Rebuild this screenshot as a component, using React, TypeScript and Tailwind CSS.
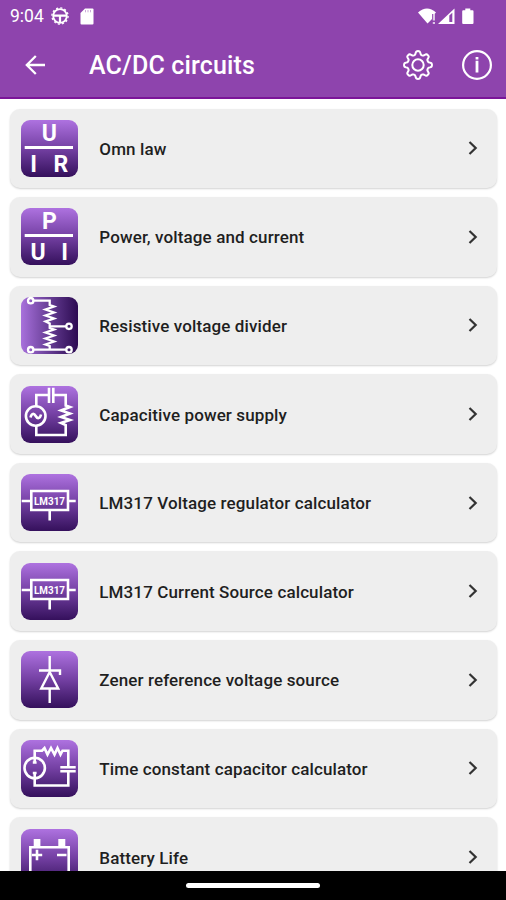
import React from "react";

const wire = { fill: "none", stroke: "#fff", strokeWidth: 2.6 };

function Letters({ top, left, right, leftX, rightX }: { top: string; left: string; right: string; leftX: number; rightX: number }) {
    return (
        <g fill="#fff" textAnchor="middle" className="font-[Roboto,sans-serif] text-[23px] font-bold">
            <text x="28.4" y="20.5">{top}</text>
            <path d="M3.7 27.5H52" stroke="#fff" strokeWidth="2.8" />
            <text x={leftX} y="51.5">{left}</text>
            <text x={rightX} y="51.5">{right}</text>
        </g>
    );
}

function Divider() {
    return (
        <g {...wire} strokeWidth={2.3}>
            <path d="M12.5 3.7H28.7V8L33 9.5L24.5 12.5L33 15.5L24.5 18.5L33 21.5L24.5 24.5L28.7 26.5V31L33 32.5L24.5 35.5L33 38.5L24.5 41.5L33 44.5L24.5 47.5L28.7 49V52.7" />
            <path d="M28.7 29.3H45.2M12.5 52.7H45.2" />
            <circle cx="9.7" cy="3.7" r="2.7" />
            <circle cx="48" cy="29.3" r="2.7" />
            <circle cx="9.7" cy="52.7" r="2.7" />
            <circle cx="48" cy="52.7" r="2.7" />
        </g>
    );
}

function PowerSupply() {
    return (
        <g {...wire}>
            <circle cx="14.7" cy="30" r="9.8" />
            <path d="M9.5 31.5C10.5 27 13 27 14.7 30S19 33 20 28.5" />
            <path d="M15.3 20V9H27.5M28 1.7V17M32.3 1.7V17M32.5 9H44.7V19.5L49 21L40 24.5L49 27.5L40 31L49 34L40 37L44.7 39V49H15.3V40" />
        </g>
    );
}

function Regulator() {
    return (
        <g>
            <path {...wire} d="M10.3 17H47V36H10.3ZM.7 27H10.3M47 27H54.7M28.7 37V46.5" />
            <text x="28.5" y="30.5" fill="#fff" textAnchor="middle" textLength="31" lengthAdjust="spacingAndGlyphs" className="font-[Roboto,sans-serif] text-[11px] font-bold">LM317</text>
        </g>
    );
}

function Zener() {
    return (
        <g {...wire} strokeWidth={2.4}>
            <path d="M28.7 5V20M28.7 38V52M18 19.5H39V24" />
            <path d="M28.7 21L20.2 37.5H37.2Z" />
        </g>
    );
}

function TimeConstant() {
    return (
        <g {...wire}>
            <circle cx="13.7" cy="28" r="10.2" />
            <path d="M13.7 23V10.7H21L23.5 8L26.5 14.5L30 8L33.5 14.5L36.5 8L39.5 14.5L41.5 10.7H47.3V26.5M39.3 27.2H54.7M39.3 31.2H54.7M47.3 31.5V45.5H13.7V32.5" />
            <path d="M11.8 22.5H15.6M11.8 33H15.6" />
        </g>
    );
}

function Battery() {
    return (
        <g>
            <path {...wire} d="M9.3 50V18.3H47.7V50Z" />
            <path d="M12.7 10H19.4V18H12.7ZM37.3 10H44.3V18H37.3Z" fill="#fff" />
            <path {...wire} d="M10.8 26H21.2M16 20.8V31.2M36 26H45.5" />
        </g>
    );
}

const items = [
    { label: "Omn law", icon: <Letters top="U" left="I" right="R" leftX={12.7} rightX={39.9} /> },
    { label: "Power, voltage and current", icon: <Letters top="P" left="U" right="I" leftX={17} rightX={43.7} /> },
    { label: "Resistive voltage divider", icon: <Divider />, sideways: true },
    { label: "Capacitive power supply", icon: <PowerSupply /> },
    { label: "LM317 Voltage regulator calculator", icon: <Regulator /> },
    { label: "LM317 Current Source calculator", icon: <Regulator /> },
    { label: "Zener reference voltage source", icon: <Zener /> },
    { label: "Time constant capacitor calculator", icon: <TimeConstant /> },
    { label: "Battery Life", icon: <Battery /> },
];

function StatusBar() {
    return (
        <div className="flex h-8 items-center pl-[10px] pr-[32px]">
            <span className="pt-px text-[17.5px] leading-none">9:04</span>
            <svg className="ml-[7px]" width="18" height="18" viewBox="0 0 18 18" fill="none" stroke="#fff">
                <circle cx="9" cy="9" r="6.8" strokeWidth="1.8" />
                <circle cx="9" cy="9" r="8.1" strokeWidth="1.3" strokeDasharray="2.1 2.14" />
                <path d="M2.5 8.7H15.5M9 9V15.5" strokeWidth="2.2" />
            </svg>
            <svg className="ml-[11px]" width="14" height="17" viewBox="0 0 14 17">
                <path d="M5 .5H12.5Q13.5 .5 13.5 1.5V15.5Q13.5 16.5 12.5 16.5H1.5Q.5 16.5 .5 15.5V5Z" fill="#fff" />
                <path d="M5.5 2V4.3M8 2V4.3M10.5 2V4.3" stroke="#8e44ad" strokeWidth=".9" opacity=".5" />
            </svg>
            <svg className="ml-auto" width="56" height="17" viewBox="0 0 56 17" fill="#fff">
                <path d="M0 4.5Q9-3.5 18 4.5L16.5 6H14V11L9.5 15.5Z" />
                <path d="M14.8 6H17V12.5H14.8ZM14.8 14H17V16H14.8Z" opacity=".7" />
                <path d="M20 16L36.5 .5V16Z" />
                <path d="M31.3 7.5L34.3 4.7V14H31.3Z" fill="#8e44ad" />
                <path d="M47.3 .5H52.3V2.2H54.5Q55.5 2.2 55.5 3.2V15Q55.5 16 54.5 16H45.2Q44.2 16 44.2 15V3.2Q44.2 2.2 45.2 2.2H47.3Z" />
            </svg>
        </div>
    );
}

// eight-toothed outline of the settings cog
const gear = Array.from({ length: 97 }, (_, i) => {
    const a = (i / 96) * Math.PI * 2;
    const w = Math.cos(8 * a);
    const r = 12.2 + 1.8 * Math.tanh(2 * w);
    return `${i ? "L" : "M"}${(16 + r * Math.sin(a)).toFixed(2)} ${(16 - r * Math.cos(a)).toFixed(2)}`;
}).join("") + "Z";

function AppBar() {
    return (
        <div className="flex h-[66px] items-center pl-[25px] pr-[13px]">
            <svg width="20" height="20" viewBox="0 0 20 20" fill="none" stroke="#fff" strokeWidth="2.3">
                <path d="M20 10H2M10.8 1L1.8 10L10.8 19" />
            </svg>
            <h1 className="ml-[44px] whitespace-nowrap pt-px text-[25px] font-medium leading-7 tracking-[0.15px]">AC/DC circuits</h1>
            <svg className="ml-auto" width="32" height="32" viewBox="0 0 32 32" fill="none" stroke="#fff" strokeWidth="2" strokeLinejoin="round">
                <path d={gear} />
                <circle cx="16" cy="16" r="5.7" />
            </svg>
            <svg className="ml-[27px]" width="32" height="32" viewBox="0 0 32 32" fill="none" stroke="#fff" strokeWidth="2.2">
                <circle cx="16" cy="16" r="13.9" />
                <path d="M16 11.7V23.5M16 8V10.6" strokeWidth="2.8" />
            </svg>
        </div>
    );
}

export default function App() {
    return (
        <div className="flex h-[900px] w-[506px] flex-col overflow-hidden bg-white font-[Roboto,sans-serif]">
            <header className="h-[99px] shrink-0 border-b-2 border-[#7b1599] bg-[#8e44ad] text-white">
                <StatusBar />
                <AppBar />
            </header>

            <main className="flex min-h-0 flex-1 flex-col gap-[9.1px] overflow-hidden px-[9.5px] pt-[9.5px]">
                {items.map((item) => (
                    <div key={item.label} className="flex h-[79.5px] shrink-0 items-center rounded-[10px] bg-[#eeeeee] pl-[11.8px] pr-[18px] shadow-[0_1px_2px_rgba(0,0,0,0.18)]">
                        <div className={`h-[57px] w-[57px] rounded-[9px] ${item.sideways ? "bg-linear-to-r from-[#a871dc] to-[#2d0a52]" : "bg-linear-to-b from-[#ae72e0] via-[#7440a3] to-[#35105c]"}`}>
                            <svg className="overflow-visible" width="57" height="57" viewBox="0 0 57 57">{item.icon}</svg>
                        </div>
                        <span className="ml-[21px] whitespace-nowrap pt-px text-[17px] font-medium leading-[22px] tracking-[0.12px] text-[#1f1f1f]">{item.label}</span>
                        <svg className="ml-auto" width="12" height="16" viewBox="0 0 12 16" fill="none" stroke="#333" strokeWidth="2.2">
                            <path d="M2.5 2L8.7 8L2.5 14" />
                        </svg>
                    </div>
                ))}
            </main>

            <footer className="flex h-[29px] shrink-0 justify-center bg-black pt-[12px]">
                <div className="h-[5px] w-[134px] rounded-full bg-white" />
            </footer>
        </div>
    );
}
